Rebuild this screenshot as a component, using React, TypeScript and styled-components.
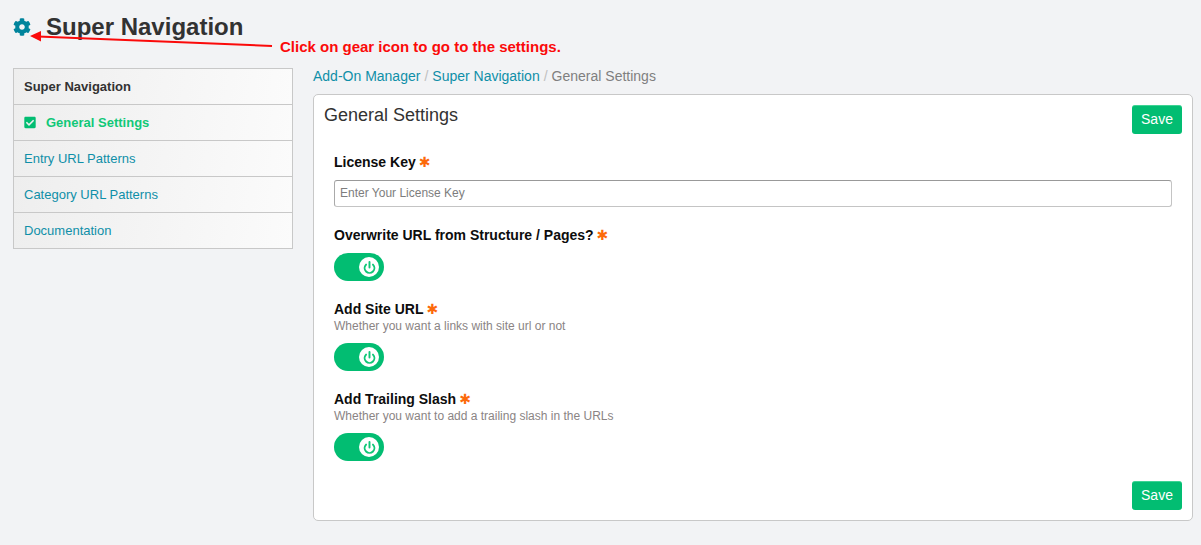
import React from "react";
import styled, { createGlobalStyle } from "styled-components";
import { FaCog, FaCheckSquare } from "react-icons/fa";
import { Power } from "lucide-react";

const Global = createGlobalStyle`
  html, body { margin: 0; padding: 0; background: #f2f3f5; }
  body { font-family: "Liberation Sans", Arial, sans-serif; color: #323232; }
  #root { min-height: 545px; }
`;

const Page = styled.div`
  position: relative;
  width: 1201px;
  height: 545px;
  padding: 13px 8px 0 13px;
  box-sizing: border-box;
  overflow: hidden;
`;

const Header = styled.header`
  display: flex;
  align-items: center;
  height: 28px;
  gap: 15px;
  margin-bottom: 27px;
`;

const GearIcon = styled(FaCog)`
  width: 18px;
  height: 18px;
  color: #00849c;
`;

const Title = styled.h1`
  margin: 0;
  font-size: 24px;
  line-height: 28px;
  font-weight: 700;
  color: #323232;
`;

const Annotation = styled.div`
  position: absolute;
  left: 280px;
  top: 38px;
  font-size: 15px;
  line-height: 17px;
  font-weight: 700;
  color: #fb0a0a;
  white-space: nowrap;
`;

const ArrowLayer = styled.svg`
  position: absolute;
  left: 0;
  top: 0;
  pointer-events: none;
`;

const Columns = styled.div`
  display: flex;
  gap: 20px;
  align-items: flex-start;
`;

const Sidebar = styled.nav`
  width: 280px;
  flex: none;
  box-sizing: border-box;
  border: 1px solid #c8c8c8;
  border-bottom: 0;
`;

const SideRow = styled.div<{ $active?: boolean; $heading?: boolean }>`
  display: flex;
  align-items: center;
  height: 36px;
  box-sizing: border-box;
  padding-left: 10px;
  border-bottom: 1px solid #c8c8c8;
  background: linear-gradient(100deg, #eeeeee 0%, #fbfbfb 100%);
  font-size: 13px;
  font-weight: ${(p) => (p.$active || p.$heading ? 700 : 400)};
  color: ${(p) => (p.$active ? "#10c878" : p.$heading ? "#323232" : "#0f8fa8")};
`;

const CheckIcon = styled(FaCheckSquare)`
  width: 12px;
  height: 13px;
  margin-right: 10px;
  color: #02bd72;
`;

const Main = styled.main`
  flex: 1;
  min-width: 0;
`;

const Crumbs = styled.div`
  height: 26px;
  font-size: 14px;
  line-height: 17px;
  color: #7f7f7f;
`;

const CrumbLink = styled.a`
  color: #0f8fa8;
  text-decoration: none;
`;

const Sep = styled.span`
  color: #c0c0c0;
  margin: 0 4px;
`;

const Panel = styled.section`
  box-sizing: border-box;
  height: 427px;
  background: #fff;
  border: 1px solid #c8c8c8;
  border-radius: 5px;
  padding: 10px;
  display: flex;
  flex-direction: column;
`;

const PanelHead = styled.div`
  display: flex;
  justify-content: space-between;
  align-items: flex-start;
  height: 48px;
`;

const PanelTitle = styled.h2`
  margin: 0;
  font-size: 18px;
  line-height: 20px;
  font-weight: 400;
  color: #323232;
`;

const SaveButton = styled.button`
  box-sizing: border-box;
  width: 50px;
  height: 29px;
  padding: 0 0 2px;
  border: 0;
  border-top: 1px solid #3ed394;
  border-radius: 3px;
  background: #02bd72;
  color: #fff;
  font-family: inherit;
  font-size: 14px;
`;

const Fields = styled.div`
  flex: 1;
  padding: 0 10px;
`;

const Field = styled.div<{ $gapBelow: number }>`
  margin-bottom: ${(p) => p.$gapBelow}px;
`;

const Label = styled.div`
  display: flex;
  align-items: center;
  gap: 3px;
  height: 17px;
  font-size: 14px;
  font-weight: 700;
  color: #0d0d0d;
`;

const Star = styled.span`
  font-family: "DejaVu Sans", sans-serif;
  font-size: 14px;
  font-weight: 700;
  line-height: 14px;
  color: #fc6a0b;
`;

const Hint = styled.div`
  font-size: 12px;
  line-height: 14px;
  margin-top: 2px;
  color: #8a8484;
`;

const KeyInput = styled.input`
  display: block;
  box-sizing: border-box;
  width: 100%;
  height: 27px;
  margin-top: 10px;
  padding: 0 5px 2px;
  border: 1px solid #c4c4c4;
  border-top-color: #999;
  border-left-color: #aaa;
  border-radius: 3px;
  background: #fff;
  font-family: inherit;
  font-size: 12px;
  outline: none;
  &::placeholder { color: #7d7d7d; opacity: 1; }
`;

const Toggle = styled.div`
  display: flex;
  justify-content: flex-end;
  align-items: center;
  box-sizing: border-box;
  width: 50px;
  height: 28px;
  margin-top: 10px;
  padding-right: 5px;
  border-radius: 14px;
  background: #02bd72;
`;

const Knob = styled.div`
  display: flex;
  align-items: center;
  justify-content: center;
  width: 20px;
  height: 20px;
  border-radius: 50%;
  background: #fff;
`;

const PowerIcon = styled(Power)`
  width: 13px;
  height: 13px;
  color: #10c878;
`;

const PanelFoot = styled.div`
  display: flex;
  justify-content: flex-end;
`;

const Switch = () => (
  <Toggle>
    <Knob>
      <PowerIcon strokeWidth={3.6} absoluteStrokeWidth={false} />
    </Knob>
  </Toggle>
);

export default function App() {
  return (
    <Page>
      <Global />
      <Header>
        <GearIcon />
        <Title>Super Navigation</Title>
      </Header>
      <Annotation>Click on gear icon to go to the settings.</Annotation>
      <ArrowLayer width="300" height="60" viewBox="0 0 300 60">
        <line x1="272" y1="46" x2="38" y2="36.5" stroke="#fb0a0a" strokeWidth="2" />
        <polygon points="30,36 41,31 41,41.5" fill="#fb0a0a" />
      </ArrowLayer>
      <Columns>
        <Sidebar>
          <SideRow $heading>Super Navigation</SideRow>
          <SideRow $active>
            <CheckIcon />
            General Settings
          </SideRow>
          <SideRow>Entry URL Patterns</SideRow>
          <SideRow>Category URL Patterns</SideRow>
          <SideRow>Documentation</SideRow>
        </Sidebar>
        <Main>
          <Crumbs>
            <CrumbLink>Add-On Manager</CrumbLink>
            <Sep>/</Sep>
            <CrumbLink>Super Navigation</CrumbLink>
            <Sep>/</Sep>
            General Settings
          </Crumbs>
          <Panel>
            <PanelHead>
              <PanelTitle>General Settings</PanelTitle>
              <SaveButton>Save</SaveButton>
            </PanelHead>
            <Fields>
              <Field $gapBelow={19}>
                <Label>License Key<Star>✱</Star></Label>
                <KeyInput placeholder="Enter Your License Key" />
              </Field>
              <Field $gapBelow={19}>
                <Label>Overwrite URL from Structure / Pages?<Star>✱</Star></Label>
                <Switch />
              </Field>
              <Field $gapBelow={19}>
                <Label>Add Site URL<Star>✱</Star></Label>
                <Hint>Whether you want a links with site url or not</Hint>
                <Switch />
              </Field>
              <Field $gapBelow={0}>
                <Label>Add Trailing Slash<Star>✱</Star></Label>
                <Hint>Whether you want to add a trailing slash in the URLs</Hint>
                <Switch />
              </Field>
            </Fields>
            <PanelFoot>
              <SaveButton>Save</SaveButton>
            </PanelFoot>
          </Panel>
        </Main>
      </Columns>
    </Page>
  );
}
